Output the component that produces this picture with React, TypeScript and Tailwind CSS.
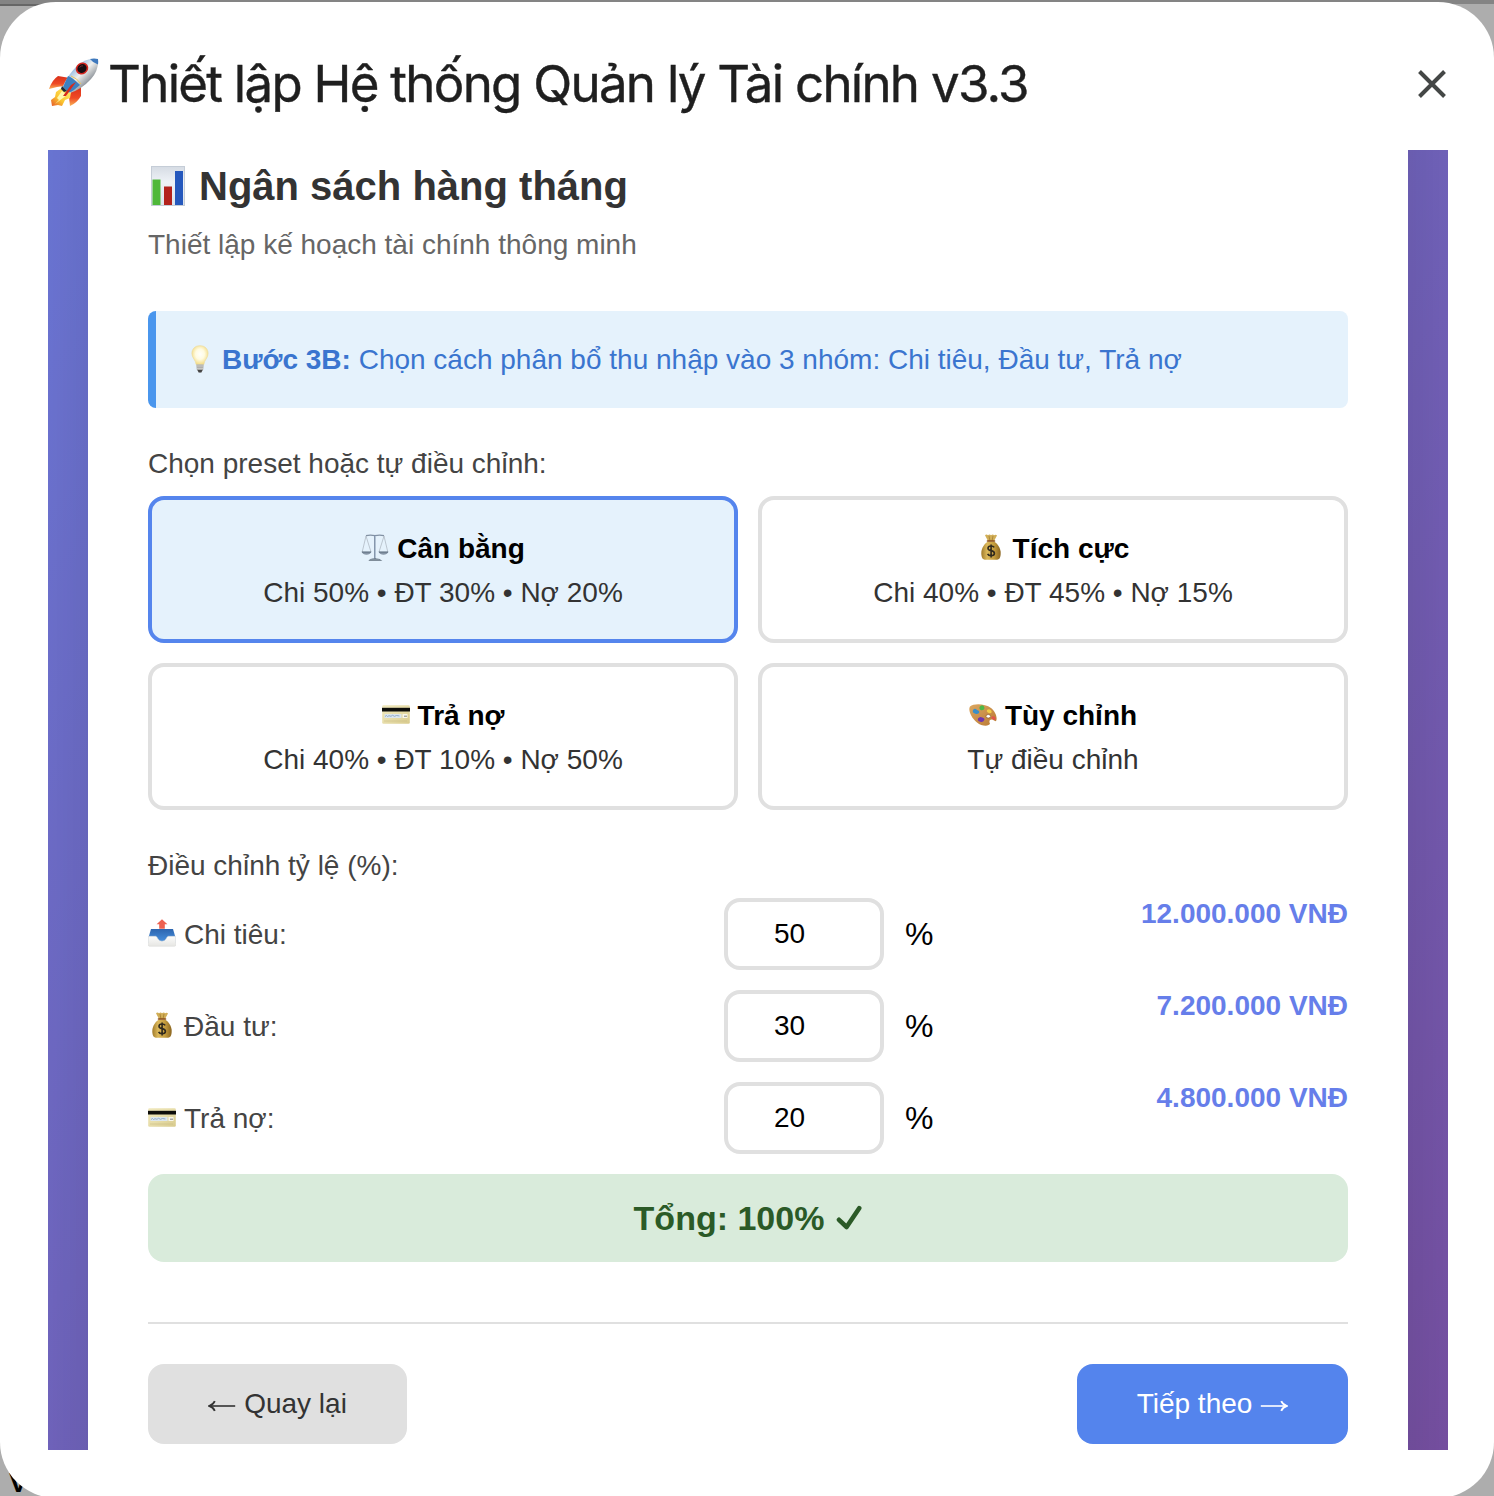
import React from "react";

type IconProps = { className?: string };

function Rocket({ className }: IconProps) {
  return (
    <svg viewBox="0 0 52 50" className={className} aria-hidden="true">
      <defs>
        <linearGradient id="rk-body" x1="0" y1="0" x2="1" y2="1">
          <stop offset="0" stopColor="#2d62a8" />
          <stop offset=".28" stopColor="#8fb8e2" />
          <stop offset=".48" stopColor="#f0f0ee" />
          <stop offset=".66" stopColor="#a3a8ad" />
          <stop offset=".85" stopColor="#39424d" />
        </linearGradient>
        <linearGradient id="rk-fin" x1="0" y1="0" x2="0" y2="1">
          <stop offset="0" stopColor="#d9301b" />
          <stop offset=".6" stopColor="#ef4a25" />
          <stop offset="1" stopColor="#f9b457" />
        </linearGradient>
        <linearGradient id="rk-flame" x1="1" y1="0" x2="0" y2="1">
          <stop offset="0" stopColor="#fff27a" />
          <stop offset=".6" stopColor="#fbc62f" />
          <stop offset="1" stopColor="#e5582a" />
        </linearGradient>
      </defs>
      <path d="M22 20 L10 18 Q4 22 1 31 L9 29 L16 28Z" fill="url(#rk-fin)" />
      <path d="M33 28 L33 38 Q29 45 22 48 L21 39 L24 31Z" fill="url(#rk-fin)" />
      <path d="M15 29 L8 34 L7 39 L3 42 L4 48 L10 47 L14 48 L17 42 L22 40 L23 34Z" fill="url(#rk-flame)" />
      <path d="M14 33 L9 40 L11 42 L7 46 L15 40 L19 37Z" fill="#fff9ac" />
      <path d="M50 1 Q38 -1 28 9 Q20 17 15 28 Q17 33 22 35 Q34 31 43 21 Q51 12 50 1Z" fill="url(#rk-body)" />
      <path d="M50 1 Q46 0 42 1 Q45 5 50 6.5Q50.4 4 50 1Z" fill="#3f79bd" />
      <path d="M20 18 Q24 19 32 27 L26 32 Q22 35 20 34 L15 29Z" fill="#3d80c0" />
      <path d="M23 18 Q29 20 33 26" fill="none" stroke="#e8c65f" strokeWidth="1" />
      <path d="M28 24 L18 38 L15 38 L23 27Z" fill="#d62a1c" />
      <path d="M14 28 L19 33 L16 34 L13 31Z" fill="#1f2937" />
      <ellipse cx="34" cy="10.5" rx="6.5" ry="5.8" fill="#d32620" transform="rotate(-35 34 10.5)" />
      <ellipse cx="34" cy="10.5" rx="4.8" ry="4.2" fill="#160d12" transform="rotate(-35 34 10.5)" />
      <path d="M31.5 9.5 Q33 7.5 35 7.8" fill="none" stroke="#6c2a33" strokeWidth="1" />
    </svg>
  );
}

function BarChart({ className }: IconProps) {
  return (
    <svg viewBox="0 0 34 40" className={className} aria-hidden="true">
      <defs>
        <linearGradient id="bc-bg" x1="0" y1="0" x2="0" y2="1">
          <stop offset="0" stopColor="#d5dbe3" />
          <stop offset=".4" stopColor="#eef2f7" />
          <stop offset="1" stopColor="#dce3ec" />
        </linearGradient>
      </defs>
      <rect width="34" height="40" fill="url(#bc-bg)" />
      <rect x=".5" y=".5" width="33" height="39" fill="none" stroke="#c5cdd7" />
      <rect x="1.5" y="13.5" width="8" height="25.5" fill="#4fb83a" />
      <rect x="13" y="20.5" width="8" height="18.5" fill="#b3221c" />
      <rect x="24" y="5" width="8" height="34" fill="#2558bd" />
    </svg>
  );
}

function Bulb({ className }: IconProps) {
  return (
    <svg viewBox="0 0 18 28" className={className} aria-hidden="true">
      <defs>
        <radialGradient id="bulb" cx=".5" cy=".45" r=".55">
          <stop offset="0" stopColor="#fffffb" />
          <stop offset=".5" stopColor="#fffbe0" />
          <stop offset="1" stopColor="#f3dc86" />
        </radialGradient>
      </defs>
      <path d="M9 .7 C3.8.7.9 4.2.9 8.5 C.9 13 4.8 15 5.1 19.5 H12.9 C13.2 15 17.1 13 17.1 8.5 C17.1 4.2 14.2.7 9 .7Z" fill="url(#bulb)" stroke="#ecdca0" strokeWidth=".7" />
      <path d="M5.3 19.5 H12.7 L12.2 24.5 L10.5 27.3 H7.5 L5.8 24.5Z" fill="#a9a9a5" />
      <path d="M5.5 21 H12.5 M5.8 23.3 H12.2" stroke="#d9d9d5" strokeWidth=".8" />
      <path d="M6.5 25 H11.5 L10.3 27.4 H7.7Z" fill="#454545" />
    </svg>
  );
}

function Scales({ className }: IconProps) {
  return (
    <svg viewBox="0 0 28 28" className={className} fill="none" aria-hidden="true">
      <path d="M5 1.7 Q9 .5 14 1.6 Q19 .5 23 1.7" stroke="#8291a3" strokeWidth="1.3" />
      <path d="M14 1 V25" stroke="#7f91a8" strokeWidth="2" />
      <path d="M14.4 2 V24" stroke="#c7d5e4" strokeWidth=".8" />
      <path d="M5 2 L1.2 18 M5 2 L10 18 M23 2 L18 18 M23 2 L26.8 18" stroke="#a9b2bb" strokeWidth=".7" />
      <path d="M.4 17.8 H10.6 Q9 20.7 5.5 20.7 Q2 20.7 .4 17.8Z M17.4 17.8 H27.6 Q26 20.7 22.5 20.7 Q19 20.7 17.4 17.8Z" fill="#8695a6" />
      <path d="M1 18 H10 M18 18 H27" stroke="#465669" strokeWidth=".7" />
      <path d="M7.4 26.8 Q9 24.5 14 24.2 Q19 24.5 21.4 26.8Z" fill="#5d6b79" />
      <path d="M9.5 25.2 H18.5" stroke="#aebbc8" strokeWidth=".7" />
    </svg>
  );
}

function MoneyBag({ className }: IconProps) {
  return (
    <svg viewBox="0 0 20 26" className={className} aria-hidden="true">
      <defs>
        <linearGradient id="mb" x1="0" y1="0" x2="1" y2="0">
          <stop offset="0" stopColor="#a17b2b" />
          <stop offset=".3" stopColor="#dcb95b" />
          <stop offset=".65" stopColor="#c59d3e" />
          <stop offset="1" stopColor="#8b651f" />
        </linearGradient>
      </defs>
      <path d="M4 1.2 Q5.5 0 7 1.3 Q8.5 0 10 1.2 Q12 0 13 1.2 Q15 0 16 1.5 L13 7 H7Z" fill="#d1ae57" />
      <path d="M8 2 L9 7 M12 2 L11 7" stroke="#9c772c" strokeWidth=".7" />
      <path d="M7 7.5 C4 9.5.3 13.5 .3 19 C.3 24.5 2 25.7 5 25.8 H15 C18 25.7 19.7 24.5 19.7 19 C19.7 13.5 16 9.5 13 7.5Z" fill="url(#mb)" />
      <path d="M6.5 7 H13.5" stroke="#8b4d1c" strokeWidth="1.6" strokeLinecap="round" />
      <path d="M13.2 13.4 Q12.4 12 10 12 Q7 12 7 14.2 Q7 16.1 10 16.6 Q13.4 17.1 13.4 19.3 Q13.4 21.7 10.1 21.7 Q7.4 21.7 6.6 19.9 M10.1 10.4 V23.4" fill="none" stroke="#302a1e" strokeWidth="1.6" />
    </svg>
  );
}

function CreditCard({ className }: IconProps) {
  return (
    <svg viewBox="0 0 28 19" className={className} aria-hidden="true">
      <defs>
        <linearGradient id="cc" x1="0" y1="0" x2="1" y2="1">
          <stop offset="0" stopColor="#f0e8bd" />
          <stop offset=".5" stopColor="#e7dda9" />
          <stop offset="1" stopColor="#d8ca8c" />
        </linearGradient>
      </defs>
      <rect x=".2" y=".2" width="27.6" height="18.6" rx="1.3" fill="url(#cc)" />
      <rect y="2.8" width="28" height="3.7" fill="#0d0d0a" />
      <rect x="2.5" y="9" width="17" height="4" fill="#dce6ed" />
      <path d="M3 11.5 l1.5-1 1 1 1.5-.8 2 .6 1.5-1 2 1 2-.8 3 .5" stroke="#7e9cc0" strokeWidth=".8" fill="none" />
      <rect x="20.5" y="9" width="5" height="4" fill="#f8f6ea" />
      <path d="M22 11.2 h3" stroke="#66686b" strokeWidth=".8" />
      <path d="M2 16 h23" stroke="#cabd84" strokeWidth=".6" />
    </svg>
  );
}

function Palette({ className }: IconProps) {
  return (
    <svg viewBox="0 0 28 22" className={className} aria-hidden="true">
      <defs>
        <linearGradient id="pl" x1="0" y1="0" x2="1" y2="1">
          <stop offset="0" stopColor="#dca760" />
          <stop offset="1" stopColor="#b97934" />
        </linearGradient>
      </defs>
      <path d="M1 2.5 C5-.8 16-.3 22 4 C26 7 28.5 13 27.3 16.5 C26.5 18.3 25 16 23 15.6 C20.5 15.4 19.8 17.6 21 19.6 C20 22.8 12.5 22.4 8 18.5 C2 14 -1.2 5.5 1 2.5Z" fill="url(#pl)" />
      <ellipse cx="19.3" cy="12.3" rx="2.3" ry="1.8" fill="#fff" stroke="#875322" strokeWidth=".6" />
      <path d="M4 6 q2-2.5 4 0 q3 1 2 3 q-2 2-4 .4 q-3-.6-2-3.4z" fill="#398fc9" />
      <path d="M10.5 3 q2-2.7 4.2-1 q1.6 2 .2 3.5 q-2 1.3-3.6.2 q-1.4-.8-.8-2.7z" fill="#4cb848" />
      <path d="M18 6 q2-1.6 4 .2 q1.3 1.8.2 2.8 q-2 .5-3.4-.5 q-1.5-1-.8-2.5z" fill="#f3cf46" />
      <path d="M22.6 12.8 q1.6-1.3 3.3.2 q1.3 2 .3 2.9 q-1.8.1-3-.9 q-1.2-1-.6-2.2z" fill="#e2544b" />
      <path d="M9 14.6 q2-2.8 4.3-1 q2.7.6 2 2.5 q-1.2 2.6-4 1.7 q-3-.5-2.3-3.2z" fill="#7037ae" />
    </svg>
  );
}

function Outbox({ className }: IconProps) {
  return (
    <svg viewBox="0 0 28 28" className={className} aria-hidden="true">
      <defs>
        <linearGradient id="ob-in" x1="0" y1="0" x2="0" y2="1">
          <stop offset="0" stopColor="#2c65af" />
          <stop offset="1" stopColor="#4a94e2" />
        </linearGradient>
        <linearGradient id="ob-tray" x1="0" y1="0" x2="0" y2="1">
          <stop offset="0" stopColor="#fcfcfb" />
          <stop offset="1" stopColor="#e6e6e3" />
        </linearGradient>
      </defs>
      <path d="M3 10 H25 L27.2 17.5 V24 H.8 V17.5Z" fill="url(#ob-in)" />
      <path d="M.3 17.3 H7.6 Q9 17.7 10 19.9 Q11.4 22.2 14 22.2 Q16.6 22.2 18 19.9 Q19 17.7 20.4 17.3 H27.7 V26 Q27.7 27.3 26.4 27.3 H1.6 Q.3 27.3 .3 26Z" fill="url(#ob-tray)" stroke="#d9d9d6" strokeWidth=".5" />
      <path d="M14 .3 L19.4 5.3 H16.8 V9.8 H11.2 V5.3 H8.6Z" fill="#ed6150" />
    </svg>
  );
}

function Check({ className }: IconProps) {
  return (
    <svg viewBox="0 0 26 26" className={className} fill="none" aria-hidden="true">
      <path d="M3 14.8 L10.6 22 L23.2 3.2" stroke="#2b5a27" strokeWidth="4.6" strokeLinecap="round" strokeLinejoin="round" />
    </svg>
  );
}

function Arrow({ className }: IconProps) {
  return (
    <svg viewBox="0 0 28 12" className={className} fill="none" aria-hidden="true">
      <path d="M.8 6 H26" stroke="currentColor" strokeWidth="1.6" />
      <path d="M21.2 1.2 Q23 4.9 26.6 6 Q23 7.1 21.2 10.8" stroke="currentColor" strokeWidth="1.9" />
    </svg>
  );
}

const presets = [
  { name: "Cân bằng", detail: "Chi 50% • ĐT 30% • Nợ 20%", icon: <Scales className="mb-0.5 h-7 w-7" />, selected: true },
  { name: "Tích cực", detail: "Chi 40% • ĐT 45% • Nợ 15%", icon: <MoneyBag className="mx-1 mb-1 h-[26px] w-5" /> },
  { name: "Trả nợ", detail: "Chi 40% • ĐT 10% • Nợ 50%", icon: <CreditCard className="mb-1 h-[19px] w-7" /> },
  { name: "Tùy chỉnh", detail: "Tự điều chỉnh", icon: <Palette className="mb-0.5 h-[22px] w-7" /> },
];

const rows = [
  { name: "Chi tiêu:", value: "50", amount: "12.000.000 VNĐ", icon: <Outbox className="mb-1 h-7 w-7" /> },
  { name: "Đầu tư:", value: "30", amount: "7.200.000 VNĐ", icon: <MoneyBag className="mx-1 mb-1 h-[26px] w-5" /> },
  { name: "Trả nợ:", value: "20", amount: "4.800.000 VNĐ", icon: <CreditCard className="mb-1 h-[19px] w-7" /> },
];

export default function App() {
  return (
    <div className="relative h-[1496px] w-[1494px] overflow-hidden bg-[#adadad] pt-0.5 font-['Liberation_Sans',Arial,sans-serif] text-[28px] leading-8">
      <div className="absolute top-0 left-0 h-1 w-full bg-[#848484]" />
      <div className="absolute top-1 left-0 h-0.5 w-20 bg-[#666]" />
      <span className="absolute top-[1467px] left-[9px] font-bold text-black">V</span>

      <div className="relative h-[1496px] rounded-[56px] bg-white px-12">
        <header className="flex h-[148px] items-center">
          <Rocket className="mt-3.5 h-[50px] w-[52px]" />
          <h1 className="mt-4 ml-2 font-['Inter',sans-serif] text-[51px] leading-[60px] tracking-[-1.72px] whitespace-nowrap text-[#1f1f1f] [-webkit-text-stroke:0.4px_#1f1f1f]">
            Thiết lập Hệ thống Quản lý Tài chính v3.3
          </h1>
          <button aria-label="Đóng" className="mt-4 ml-auto">
            <svg viewBox="0 0 28 28" className="h-7 w-8 pl-1" aria-hidden="true" preserveAspectRatio="none">
              <path d="M1.5 1.5 L26.5 26.5 M26.5 1.5 L1.5 26.5" stroke="#444746" strokeWidth="4" />
            </svg>
          </button>
        </header>

        <div className="h-[1300px] w-[1400px] overflow-hidden bg-[linear-gradient(135deg,#6e7ee2,#7b53a8)] bg-[length:1400px_1490px] bg-bottom px-10">
          <main className="-mt-[250px] h-[1670px] bg-white px-[60px] pt-[263px] shadow-[0_40px_120px_rgba(0,0,0,0.2)]">
            <h2 className="flex h-[46px] items-center text-[40px] leading-[46px] font-bold text-[#333]">
              <BarChart className="mr-[14px] ml-[3px] h-10 w-[34px]" />
              Ngân sách hàng tháng
            </h2>
            <p className="mt-5 text-[#666]">Thiết lập kế hoạch tài chính thông minh</p>

            <div className="mt-[50px] flex h-[97px] items-center rounded-lg border-l-8 border-[#4a96ed] bg-[#e5f2fc] pl-[35px] text-[#3a75cf]">
              <Bulb className="mr-[13px] mb-0.5 h-7 w-[18px]" />
              <p>
                <strong>Bước 3B:</strong> Chọn cách phân bổ thu nhập vào 3 nhóm: Chi tiêu, Đầu tư, Trả nợ
              </p>
            </div>

            <p className="mt-10 text-[#444]">Chọn preset hoặc tự điều chỉnh:</p>
            <div className="mt-4 grid grid-cols-2 gap-5">
              {presets.map((p) => (
                <button
                  key={p.name}
                  className={
                    p.selected
                      ? "flex h-[147px] flex-col items-center rounded-2xl border-4 border-[#5585ed] bg-[#e5f2fc] pt-[33px]"
                      : "flex h-[147px] flex-col items-center rounded-2xl border-4 border-[#e0e0e0] bg-white pt-[33px]"
                  }
                >
                  <span className="flex h-8 items-center gap-2 font-bold text-black">
                    {p.icon}
                    {p.name}
                  </span>
                  <span className="mt-3 text-[#333]">{p.detail}</span>
                </button>
              ))}
            </div>

            <p className="mt-10 text-[#444]">Điều chỉnh tỷ lệ (%):</p>
            <div className="mt-4 flex flex-col gap-5">
              {rows.map((r) => (
                <div key={r.name} className="flex h-[72px] items-center">
                  <span className="flex w-[576px] items-center gap-2 pt-0.5 text-[#444]">
                    {r.icon}
                    {r.name}
                  </span>
                  <span className="flex h-[72px] w-40 items-center rounded-2xl border-4 border-[#e0e0e0] bg-white pl-[46px] text-black">
                    {r.value}
                  </span>
                  <span className="ml-[21px] text-[32px] leading-9 text-black">%</span>
                  <span className="ml-auto self-start font-bold text-[#667eea]">{r.amount}</span>
                </div>
              ))}
            </div>

            <div className="mt-5 flex h-[88px] items-center justify-center gap-3 rounded-2xl bg-[#d9ebdb] text-[34px] leading-10 font-bold text-[#2b5a27]">
              Tổng: 100%
              <Check className="h-[26px] w-[26px]" />
            </div>

            <footer className="mt-[60px] flex justify-between border-t-2 border-[#e0e0e0] pt-10">
              <button className="flex h-20 w-[259px] items-center justify-center gap-2 rounded-2xl bg-[#e0e0e0] text-[#333]">
                <Arrow className="mt-1 h-3 w-7 rotate-180" />
                Quay lại
              </button>
              <button className="flex h-20 w-[271px] items-center justify-center gap-2 rounded-2xl bg-[#5484ed] text-white">
                Tiếp theo
                <Arrow className="mt-1 h-3 w-7" />
              </button>
            </footer>
          </main>
        </div>
      </div>
    </div>
  );
}
